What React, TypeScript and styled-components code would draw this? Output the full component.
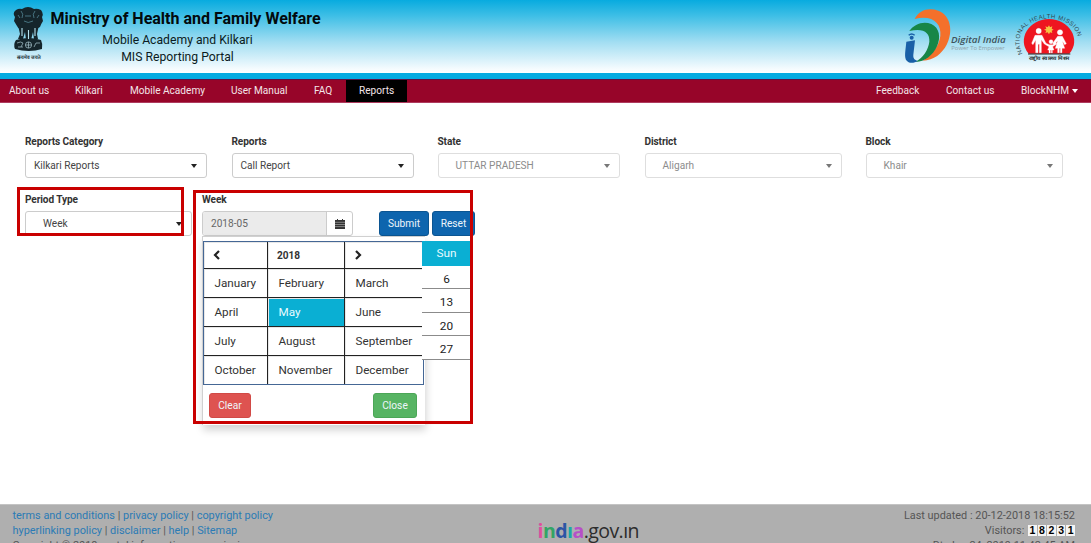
import React from "react";
import styled, { createGlobalStyle } from "styled-components";

const GlobalStyle = createGlobalStyle`
  *, *::before, *::after { box-sizing: border-box; }
  body {
    margin: 0;
    background: #fff;
    color: #333;
    font-family: Roboto, "Liberation Sans", sans-serif;
    font-size: 10.1px;
    overflow: hidden;
  }
`;

const Page = styled.div`
  display: flex;
  flex-direction: column;
  width: 1091px;
  height: 543px;
  overflow: hidden;
`;

const Header = styled.header`
  flex: none;
  display: flex;
  height: 79px;
  border-bottom: 6px solid #05abe1;
  background: linear-gradient(#08abdf 0, #3fbfe6 22%, #a3def2 58%, #f4fbfe 94%, #fff 100%);
`;

const EmblemBox = styled.div`
  width: 50.5px;
  padding: 6px 0 0 12px;
`;

const Titles = styled.div`
  display: flex;
  flex-direction: column;
  align-items: center;
  width: 254px;
  color: #0b1b22;
  font-size: 12.2px;
  line-height: 17px;
  white-space: nowrap;
`;

const Title = styled.h1`
  align-self: flex-start;
  margin: 10px 0 4px;
  font-size: 16px;
  line-height: 18px;
  font-weight: 700;
  color: #020a0d;
`;

const Subtitle = styled.div``;

const Logos = styled.div`
  flex: 1;
  display: flex;
  justify-content: flex-end;
  gap: 5px;
`;

const Nav = styled.nav`
  flex: none;
  display: flex;
  height: 24px;
  border-top: 1px solid #5b1245;
  border-bottom: 1px solid #ae3b5e;
  background: #970529;
  overflow: hidden;
`;

const NavGroup = styled.div<{ $end?: boolean }>`
  display: flex;
  margin-left: ${(p) => (p.$end ? "auto" : "-4px")};
`;

const NavItem = styled.a<{ $w: number; $active?: boolean }>`
  display: flex;
  align-items: center;
  width: ${(p) => p.$w}px;
  padding: 0 0 1px 13px;
  color: #f3e4e8;
  background: ${(p) => (p.$active ? "#000" : "transparent")};
  white-space: nowrap;
`;

const Caret = styled.span<{ $color?: string }>`
  display: inline-block;
  flex: none;
  border: 3.5px solid transparent;
  border-top: 4px solid ${(p) => p.$color ?? "#222"};
  border-bottom: 0;
`;

const Main = styled.main`
  flex: none;
  height: 401px;
  padding: 32px 0 0 25px;
`;

const FilterRow = styled.div<{ $top?: number }>`
  display: flex;
  margin-top: ${(p) => p.$top ?? 0}px;
`;

const Field = styled.div<{ $w: number; $gap: number }>`
  width: ${(p) => p.$w}px;
  margin-right: ${(p) => p.$gap}px;
`;

const Label = styled.label`
  display: block;
  height: 18px;
  line-height: 14px;
  font-size: 10.1px;
  font-weight: 700;
  letter-spacing: -0.1px;
  white-space: nowrap;
`;

const Select = styled.div<{ $indent?: number; $muted?: boolean }>`
  display: flex;
  align-items: center;
  justify-content: space-between;
  height: 25px;
  padding: 0 9px 0 ${(p) => p.$indent ?? 8}px;
  border: 1px solid ${(p) => (p.$muted ? "#dedede" : "#ccc")};
  border-radius: 3px;
  background: #fff;
  color: ${(p) => (p.$muted ? "#8c8c8c" : "#444")};
`;

const InputGroup = styled.div`
  display: flex;
  height: 25px;
  border: 1px solid #ccc;
  border-radius: 3px;
  overflow: hidden;
`;

const DateValue = styled.div`
  width: 123px;
  padding-left: 8px;
  line-height: 24px;
  background: #ebebeb;
  color: #666;
`;

const CalendarButton = styled.div`
  flex: 1;
  display: flex;
  align-items: center;
  justify-content: center;
  border-left: 1px solid #ccc;
`;

const Button = styled.button<{ $w: number; $color: string; $edge: string }>`
  width: ${(p) => p.$w}px;
  height: 25px;
  padding: 0;
  border: 1px solid ${(p) => p.$edge};
  border-radius: 3px;
  background: ${(p) => p.$color};
  color: #eef5fb;
  font: 10.2px Roboto, "Liberation Sans", sans-serif;
`;

const Actions = styled.div`
  display: flex;
  gap: 3px;
  margin-top: 18px;
`;

const Outline = styled.div<{ $x: number; $y: number; $w: number; $h: number }>`
  position: absolute;
  z-index: 5;
  left: ${(p) => p.$x}px;
  top: ${(p) => p.$y}px;
  width: ${(p) => p.$w}px;
  height: ${(p) => p.$h}px;
  border: 3px solid #c90000;
`;

const Popup = styled.div`
  position: absolute;
  z-index: 2;
  left: 202px;
  top: 236px;
  width: 223px;
  height: 189px;
  padding: 4px 0 0;
  border: 1px solid #d0d0d0;
  border-width: 1px 0 0 1px;
  background: #fff;
  box-shadow: 1px 5px 8px rgba(0, 0, 0, 0.18);
`;

const MonthGrid = styled.div`
  display: grid;
  grid-template-columns: 64px 77px 78px;
  grid-template-rows: 27px 29px 29px 29px 28px;
  width: 221px;
  height: 144px;
  border: 1px solid #456795;
`;

const MonthCell = styled.div<{ $head?: boolean; $selected?: boolean; $lastCol?: boolean; $lastRow?: boolean }>`
  display: flex;
  align-items: center;
  padding-left: ${(p) => (p.$head ? 9 : 10.5)}px;
  border-right: ${(p) => (p.$lastCol ? "0" : "1px solid #222")};
  border-bottom: ${(p) => (p.$lastRow ? "0" : "1px solid #222")};
  box-shadow: inset 1px 1px 0 #e7e7e7;
  font-size: ${(p) => (p.$head ? 10.1 : 11.7)}px;
  font-weight: ${(p) => (p.$head ? 700 : 400)};
  color: ${(p) => (p.$selected ? "#e9fbff" : "#333")};
  background: ${(p) => (p.$selected ? "#0aafd3" : "#fff")};
`;

const PopupActions = styled.div`
  display: flex;
  justify-content: space-between;
  padding: 8px 8px 0 6px;
`;

const SundayColumn = styled.div`
  position: absolute;
  z-index: 3;
  left: 422px;
  top: 241px;
  width: 49px;
  background: #fff;
`;

const SundayHead = styled.div`
  height: 25px;
  line-height: 25px;
  text-align: center;
  font-size: 11.8px;
  color: #e9fbff;
  background: #0aafd3;
`;

const SundayCell = styled.div`
  height: 23.4px;
  padding-top: 3px;
  line-height: 21px;
  text-align: center;
  border-bottom: 1px solid #8b8b8b;
  font-size: 11.8px;
  color: #222;
`;

const Footer = styled.footer`
  flex: 1;
  display: flex;
  padding: 3px 16px 0 12.5px;
  border-top: 1px solid #c4c4c4;
  background: #afafaf;
  color: #555;
  font-size: 10.9px;
  line-height: 15px;
  white-space: nowrap;
  overflow: hidden;
`;

const FooterSide = styled.div<{ $end?: boolean }>`
  flex: ${(p) => (p.$end ? "1" : "0 0 525px")};
  height: 60px;
  text-align: ${(p) => (p.$end ? "right" : "left")};
`;

const FooterLink = styled.a`
  color: #2b7bb5;
`;

const Portal = styled.div`
  height: 34px;
  margin-top: 12px;
  font: 500 19.5px/22px "Open Sans", sans-serif;
  letter-spacing: -0.55px;
  color: #2c2c2c;
`;

const Tint = styled.span<{ $c: string }>`
  color: ${(p) => p.$c};
  font-weight: 700;
`;

const Digits = styled.span`
  display: inline-flex;
  gap: 1px;
  margin-left: 1px;
  vertical-align: top;
  padding-top: 2px;
`;

const Digit = styled.span`
  width: 8.6px;
  height: 11px;
  background: #f4f4f4;
  color: #000;
  font: 700 10.5px/11px "Liberation Sans", sans-serif;
  text-align: center;
`;

const Emblem = () => (
  <svg width="33" height="55" viewBox="0 0 33 55">
    <g fill="#15252b">
      <path d="M10 3Q16 -1 22 3Q25 2 29 4Q32 8 30 11L31 15Q29 18 28 21Q24 24 21 22Q16 25 12 22Q7 25 5 20L2 15L3 11Q0 7 4 4Q7 2 10 3Z" />
      <path d="M6 19H27L25 28L26 33H22L21 26L19 34H14L13 26L11 33H6L8 28Z" />
      <path d="M4 34Q17 30 29 34Q31 38 30 43Q17 47 3 43Q1 38 4 34Z" />
    </g>
    <g fill="none" stroke="#5c93a3" strokeWidth="0.7">
      <path d="M9 5Q12 8 10 12M23 5Q20 8 22 12M13 10H19M12 15Q16 18 21 15M6 9L8 12M27 9L25 12" />
      <path d="M10 22V30M16.500 24V33M23 22V30" stroke="#b7e4f1" strokeWidth="1.1" />
      <circle cx="16.500" cy="39" r="3.100" stroke="#a9c6ce" />
      <path d="M5 37Q9 35 11 37L9 41M22 41L24 37H28M6 41H11M16.500 36V42M13.500 39H19.500" stroke="#a9c6ce" />
    </g>
    <text x="16.500" y="52.500" fontSize="5" fontWeight="700" textAnchor="middle" textLength="24" lengthAdjust="spacingAndGlyphs" fill="#1c3038">सत्यमेव जयते</text>
  </svg>
);

const DigitalIndia = () => (
  <svg width="108" height="73" viewBox="66 0 324 219">
    <path fill="#f4702b" d="M107 57C120 29 150 22 178 32C216 47 223 94 203 134C189 160 165 181 131 182C163 161 180 137 184 108C188 70 160 44 107 57Z" />
    <path fill="#178647" d="M91 93C106 71 134 62 157 72C182 83 186 113 174 139C162 166 135 187 109 186C132 173 148 150 151 125C153 97 133 83 91 93Z" />
    <path fill="#1960a7" d="M82 125L108 121L103 164C102 175 107 180 116 182C107 190 91 191 84 183C74 173 80 150 82 125Z" />
    <circle cx="98" cy="113" r="6" fill="#1960a7" />
    <path d="M89 106Q98 98 107 106" fill="none" stroke="#1960a7" strokeWidth="4" />
    <text x="216" y="130" fontFamily="Open Sans, sans-serif" fontSize="28" fontStyle="italic" fontWeight="600" textLength="164" lengthAdjust="spacingAndGlyphs" fill="#3e535c">Digital India</text>
    <text x="217" y="151" fontFamily="Open Sans, sans-serif" fontSize="16" textLength="160" lengthAdjust="spacingAndGlyphs" fill="#8fa3ac">Power To Empower</text>
  </svg>
);

const HealthMission = () => (
  <svg width="77" height="73" viewBox="402 0 231 219">
    <defs>
      <path id="missionArc" d="M428 161C397 99 446 55 507 55C568 55 617 99 586 161" />
    </defs>
    <path fill="#ee1620" d="M446 161C409 118 447 57 507 57C567 57 605 118 568 161Z" />
    <text fontFamily="Liberation Sans, sans-serif" fontSize="18" fill="#33464d">
      <textPath href="#missionArc" textLength="274">NATIONAL HEALTH MISSION</textPath>
    </text>
    <path fill="#f6c443" d="M507 76L510 82L517 79L515 86L521 89L515 92L517 99L510 97L507 103L503 97L496 99L499 92L492 89L499 86L496 79L503 82Z" />
    <g fill="#fff" stroke="#fff" strokeLinejoin="round">
      <circle cx="476" cy="93" r="8" />
      <path d="M465 106H486L497 128L493 132L484 119V158H478V133H474V158H467V120L459 134L455 130Z" />
      <circle cx="540" cy="97" r="8" />
      <path d="M533 109H547L559 131L554 134L547 123L554 145H546V158H541V145H538V158H533V145H526L533 122L523 134L518 130Z" />
      <circle cx="513" cy="125" r="6" />
      <path d="M495 128L508 134H518L528 128L530 132L518 140L522 150H517V159H514V150H511V159H507V150H503L507 140L493 132Z" />
    </g>
    <path d="M444 162H571" stroke="#222" strokeWidth="3" />
    <text x="508" y="179" fontSize="15" fontWeight="700" textAnchor="middle" textLength="124" lengthAdjust="spacingAndGlyphs" fill="#2a3437">राष्ट्रीय स्वास्थ्य मिशन</text>
  </svg>
);

const CalendarIcon = () => (
  <svg width="10" height="10" viewBox="0 0 10 10">
    <path fill="#333" d="M0 1H2V0H3V1H7V0H8V1H10V10H0Z" />
    <path stroke="#bbb" strokeWidth="0.6" d="M0 3.300H10M0 5.500H10M0 7.600H10" />
  </svg>
);

const Chevron = ({ right }: { right?: boolean }) => (
  <svg width="8" height="10" viewBox="0 0 8 10">
    <path d={right ? "M2 1L6 5L2 9" : "M6 1L2 5L6 9"} fill="none" stroke="#222" strokeWidth="2.200" />
  </svg>
);

const filters = [
  { label: "Reports Category", value: "Kilkari Reports", w: 182, gap: 24.5 },
  { label: "Reports", value: "Call Report", w: 182, gap: 24 },
  { label: "State", value: "UTTAR PRADESH", w: 182, gap: 25 },
  { label: "District", value: "Aligarh", w: 197, gap: 24 },
  { label: "Block", value: "Khair", w: 197, gap: 0 },
].map((f, i) => ({ ...f, muted: i > 1 }));

const months = ["January", "February", "March", "April", "May", "June", "July", "August", "September", "October", "November", "December"];

export default function App() {
  return (
    <Page>
      <GlobalStyle />
      <Header>
        <EmblemBox><Emblem /></EmblemBox>
        <Titles>
          <Title>Ministry of Health and Family Welfare</Title>
          <Subtitle>Mobile Academy and Kilkari</Subtitle>
          <Subtitle>MIS Reporting Portal</Subtitle>
        </Titles>
        <Logos><DigitalIndia /><HealthMission /></Logos>
      </Header>
      <Nav>
        <NavGroup>
          <NavItem $w={66}>About us</NavItem>
          <NavItem $w={55}>Kilkari</NavItem>
          <NavItem $w={101}>Mobile Academy</NavItem>
          <NavItem $w={83}>User Manual</NavItem>
          <NavItem $w={45}>FAQ</NavItem>
          <NavItem $w={61} $active>Reports</NavItem>
        </NavGroup>
        <NavGroup $end>
          <NavItem $w={70}>Feedback</NavItem>
          <NavItem $w={75}>Contact us</NavItem>
          <NavItem $w={83}>BlockNHM&nbsp;<Caret $color="#fff" /></NavItem>
        </NavGroup>
      </Nav>
      <Main>
        <FilterRow>
          {filters.map((f) => (
            <Field key={f.label} $w={f.w} $gap={f.gap}>
              <Label>{f.label}</Label>
              <Select $muted={f.muted} $indent={f.muted ? 17 : 8}>
                {f.value}
                <Caret $color={f.muted ? "#777" : "#222"} />
              </Select>
            </Field>
          ))}
        </FilterRow>
        <FilterRow $top={15}>
          <Field $w={167} $gap={10}>
            <Label>Period Type</Label>
            <Select $indent={17}>Week<Caret /></Select>
          </Field>
          <Field $w={151} $gap={26}>
            <Label>Week</Label>
            <InputGroup>
              <DateValue>2018-05</DateValue>
              <CalendarButton><CalendarIcon /></CalendarButton>
            </InputGroup>
          </Field>
          <Actions>
            <Button $w={50} $color="#0e65ae" $edge="#0b5592">Submit</Button>
            <Button $w={43} $color="#0e65ae" $edge="#0b5592">Reset</Button>
          </Actions>
        </FilterRow>
        <Popup>
          <MonthGrid>
            <MonthCell $head><Chevron /></MonthCell>
            <MonthCell $head>2018</MonthCell>
            <MonthCell $head $lastCol><Chevron right /></MonthCell>
            {months.map((m, i) => (
              <MonthCell key={m} $selected={m === "May"} $lastCol={i % 3 === 2} $lastRow={i > 8}>{m}</MonthCell>
            ))}
          </MonthGrid>
          <PopupActions>
            <Button $w={42} $color="#de5350" $edge="#d14a46">Clear</Button>
            <Button $w={44} $color="#57b463" $edge="#4ca657">Close</Button>
          </PopupActions>
        </Popup>
        <SundayColumn>
          <SundayHead>Sun</SundayHead>
          {[6, 13, 20, 27].map((d) => <SundayCell key={d}>{d}</SundayCell>)}
        </SundayColumn>
        <Outline $x={17} $y={187} $w={167} $h={49} />
        <Outline $x={193} $y={190} $w={280} $h={234} />
      </Main>
      <Footer>
        <FooterSide>
          <div><FooterLink>terms and conditions</FooterLink> | <FooterLink>privacy policy</FooterLink> | <FooterLink>copyright policy</FooterLink></div>
          <div><FooterLink>hyperlinking policy</FooterLink> | <FooterLink>disclaimer</FooterLink> | <FooterLink>help</FooterLink> | <FooterLink>Sitemap</FooterLink></div>
          <div>Copyright © 2018 portal information, commission</div>
        </FooterSide>
        <Portal>
          <Tint $c="#df4f9d">i</Tint><Tint $c="#32a565">n</Tint><Tint $c="#2c55a5">d</Tint><Tint $c="#18aaa8">ı</Tint><Tint $c="#b64fc8">a</Tint>.gov.ın
        </Portal>
        <FooterSide $end>
          <div>Last updated : 20-12-2018 18:15:52</div>
          <div>Visitors: <Digits>{[..."18231"].map((d, i) => <Digit key={i}>{d}</Digit>)}</Digits></div>
          <div>Dt: Jan 24, 2019 11:42:45 AM</div>
        </FooterSide>
      </Footer>
    </Page>
  );
}
